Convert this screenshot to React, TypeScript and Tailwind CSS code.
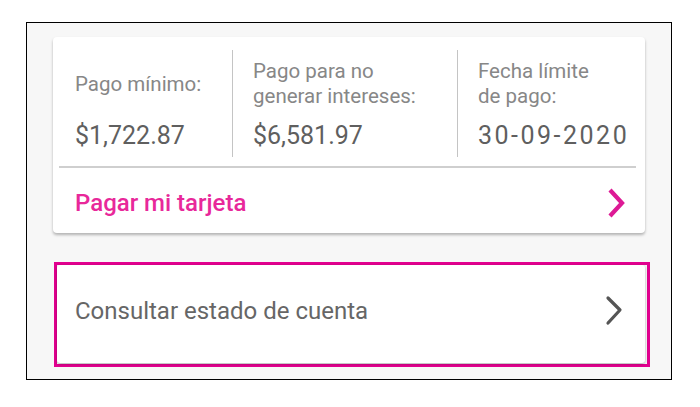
export default function App() {
  return (
    <div className="min-h-[407px] w-[700px] bg-white pt-[22px] pl-[26px] font-['Roboto',sans-serif]">
      <div className="h-[358px] w-[646px] border border-black bg-[#f7f7f7] pl-[26px] pt-[14px]">
        {/* resumen de pago */}
        <div className="w-[592px] rounded-[4px] bg-white shadow-[0_2px_3px_rgba(0,0,0,0.28)]">
          <div className="flex pt-[13px]">
            <div className="w-[180px] pl-[22px] pt-[9px] pb-[6px] border-r border-[#c4c4c4]">
              <div className="flex h-[50px] items-center text-[20.5px] leading-[25px] text-[#878787]">Pago mínimo:</div>
              <div className="mt-[12px] text-[25px] leading-[30px] text-[#5f5f5f]">$1,722.87</div>
            </div>
            <div className="w-[225px] pl-[20px] pt-[9px] pb-[6px] border-r border-[#c4c4c4]">
              <div className="h-[50px] text-[20.5px] leading-[25px] text-[#878787]">
                Pago para no
                <br />
                generar intereses:
              </div>
              <div className="mt-[12px] text-[25px] leading-[30px] text-[#5f5f5f]">$6,581.97</div>
            </div>
            <div className="flex-1 pl-[20px] pt-[9px] pb-[6px]">
              <div className="h-[50px] text-[20.5px] leading-[25px] text-[#878787]">
                Fecha límite
                <br />
                de pago:
              </div>
              <div className="mt-[12px] text-[25px] leading-[30px] tracking-[2.5px] text-[#5f5f5f]">30-09-2020</div>
            </div>
          </div>
          <div className="ml-[6px] mr-[9px] mt-[9px] h-[2px] bg-[#cfcfcf]" />
          <div className="flex h-[65px] items-center justify-between pl-[22px] pr-[18px] pt-[4px]">
            <span className="text-[24px] font-medium text-[#e8289a]">Pagar mi tarjeta</span>
            <svg width="22" height="32" viewBox="0 0 22 32" fill="none">
              <polyline points="5,3 17,16 5,29" stroke="#dd1a95" strokeWidth="4.2" strokeLinejoin="miter" />
            </svg>
          </div>
        </div>

        {/* estado de cuenta */}
        <div className="mt-[29px] ml-[1px] w-[596px] border-[3px] border-[#e2008f] pr-[2px] pb-[1px]">
          <div className="flex h-[98px] items-center justify-between rounded-[3px] bg-white pl-[18px] pr-[20px] pb-[6px] shadow-[0_1px_3px_rgba(0,0,0,0.3)]">
            <span className="text-[24px] text-[#666666]">Consultar estado de cuenta</span>
            <svg width="22" height="32" viewBox="0 0 22 32" fill="none">
              <polyline points="5,3 17,15 5,28" stroke="#555555" strokeWidth="3.2" strokeLinecap="round" strokeLinejoin="round" />
            </svg>
          </div>
        </div>
      </div>
    </div>
  );
}
